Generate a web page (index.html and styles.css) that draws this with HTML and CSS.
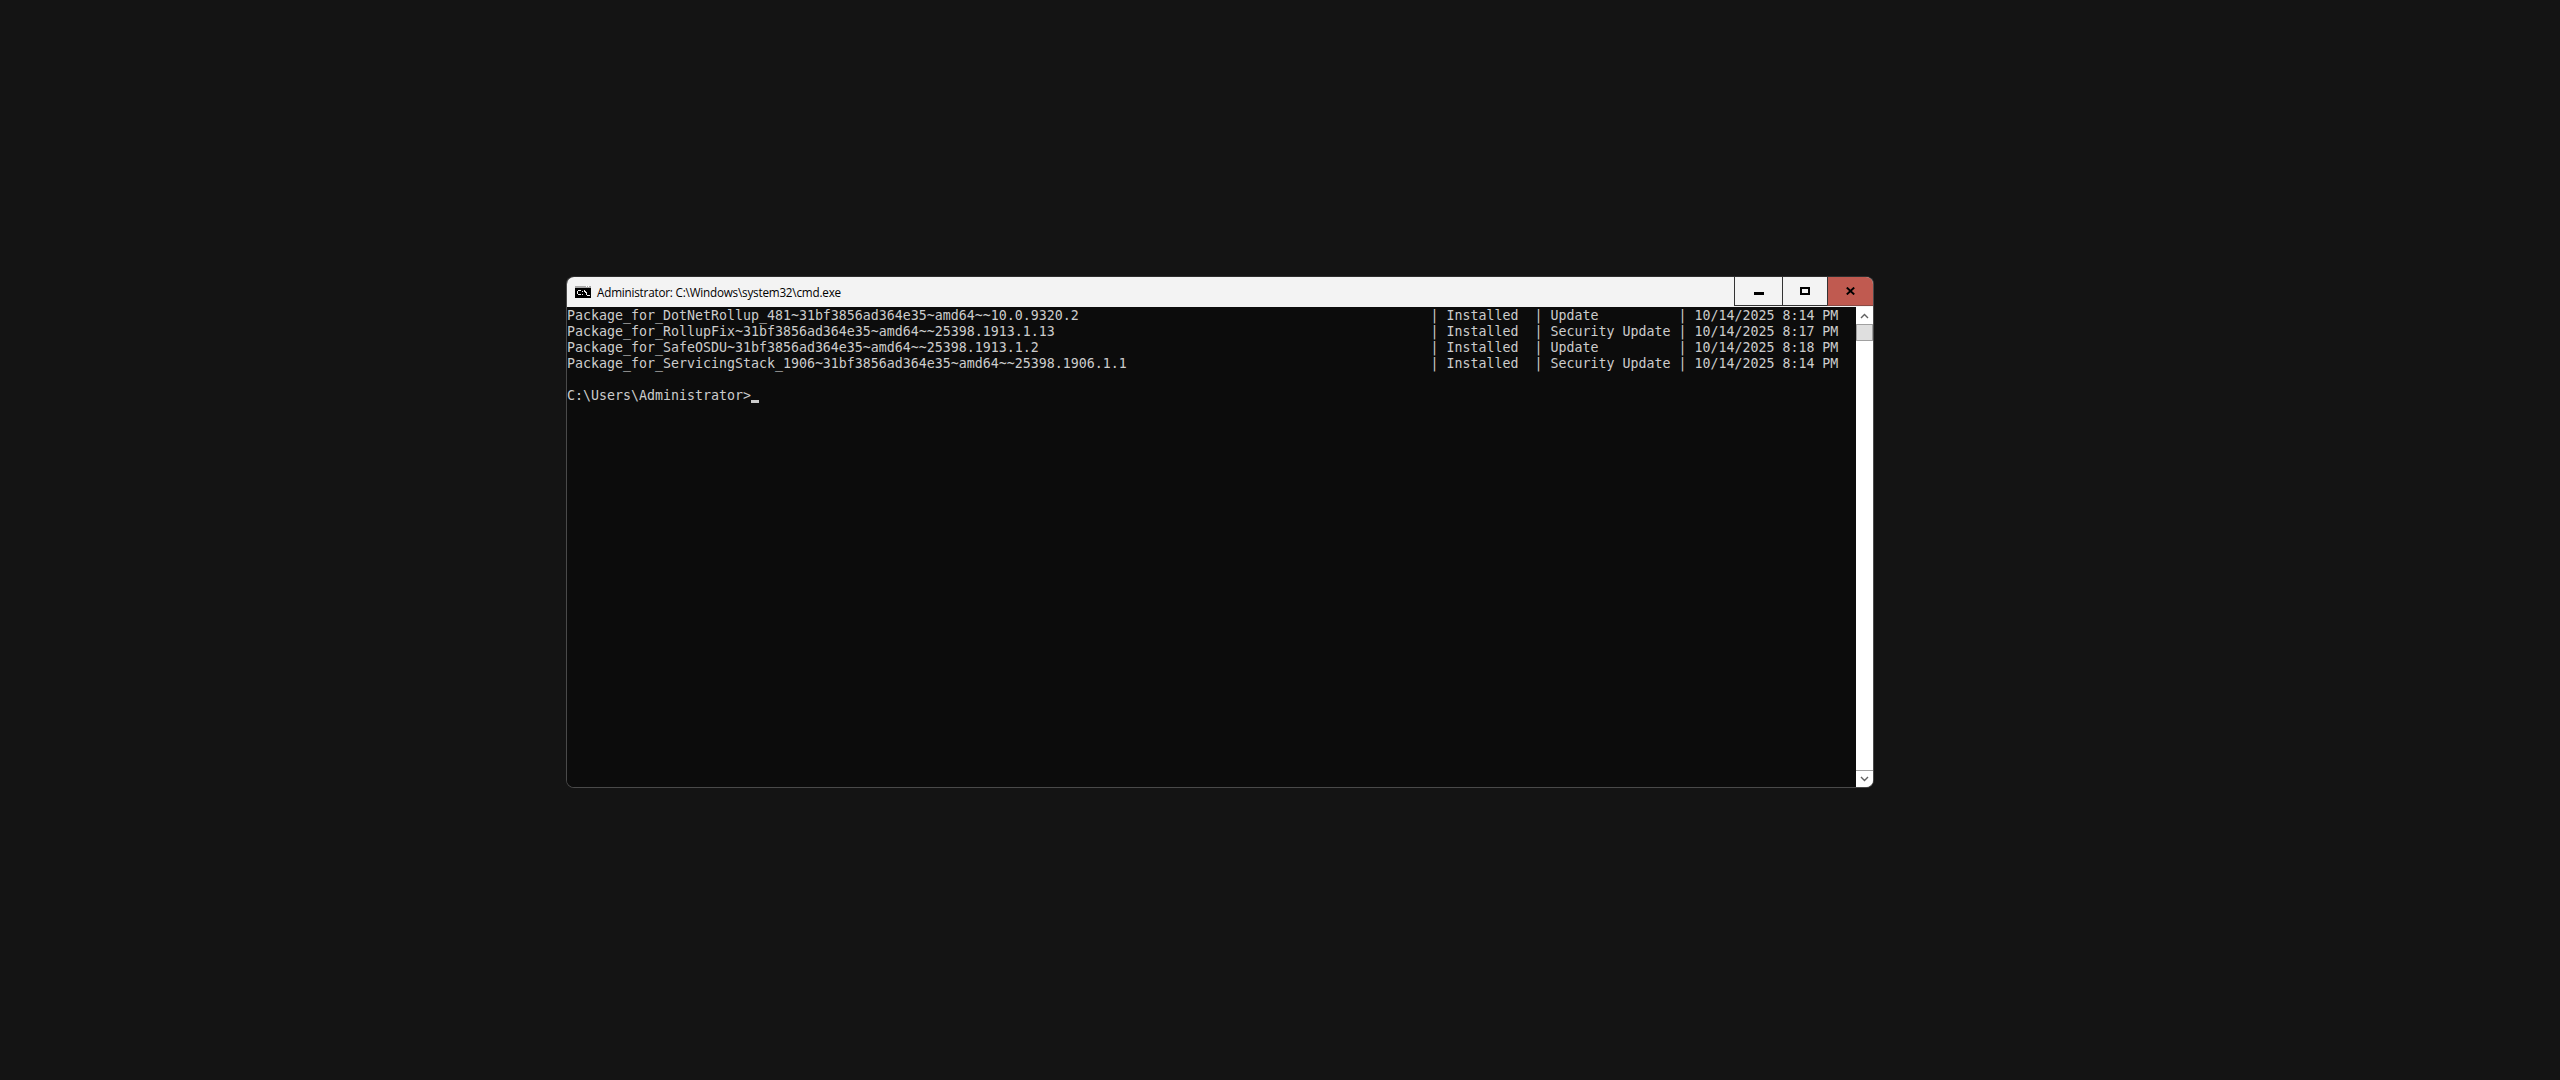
FILE: index.html
```html
<!DOCTYPE html>
<html lang="en">
<head>
<meta charset="utf-8">
<title>Administrator: C:\Windows\system32\cmd.exe</title>
<link rel="stylesheet" href="styles.css">
</head>
<body>
<div class="window">
  <header class="titlebar">
    <svg class="app-icon" width="16" height="12" viewBox="0 0 16 12">
      <rect width="16" height="12" fill="#000"/>
      <rect width="16" height="2" fill="#a8a8a8"/>
      <rect x="11" y="0" width="1" height="1" fill="#fff"/>
      <rect x="13" y="0" width="1" height="1" fill="#fff"/>
      <path d="M3 4h3v1H3v3h3v1H3V8H2V5h1zM7 5h1v1H7zM7 8h1v1H7zM9 4h1v1h1v1h1v3h-1V7h-1V6H9zM12 9h3v1h-3z" fill="#f0f0f0"/>
    </svg>
    <span class="title">Administrator: C:\Windows\system32\cmd.exe</span>
    <div class="controls">
      <button class="ctl min"><svg class="min-glyph" width="10" height="3" viewBox="0 0 10 3"><rect width="10" height="3" fill="#000"/></svg></button>
      <button class="ctl max"><svg width="10" height="8" viewBox="0 0 10 8"><path d="M0 0h10v8H0zM2 2v4h6V2z" fill="#000" fill-rule="evenodd"/></svg></button>
      <button class="ctl close"><svg width="9" height="8" viewBox="0 0 9 8"><path d="M.8.6l7.4 6.8M8.2.6L.8 7.4" stroke="#000" stroke-width="2" fill="none"/></svg></button>
    </div>
  </header>
  <div class="body">
    <pre class="console">Package_for_DotNetRollup_481~31bf3856ad364e35~amd64~~10.0.9320.2                                            | Installed  | Update          | 10/14/2025 8:14 PM
Package_for_RollupFix~31bf3856ad364e35~amd64~~25398.1913.1.13                                               | Installed  | Security Update | 10/14/2025 8:17 PM
Package_for_SafeOSDU~31bf3856ad364e35~amd64~~25398.1913.1.2                                                 | Installed  | Update          | 10/14/2025 8:18 PM
Package_for_ServicingStack_1906~31bf3856ad364e35~amd64~~25398.1906.1.1                                      | Installed  | Security Update | 10/14/2025 8:14 PM

C:\Users\Administrator&gt;<span class="cursor"></span></pre>
    <div class="scrollbar">
      <div class="sb-btn"><svg width="9" height="6" viewBox="0 0 9 6"><path d="M1 5l3.5-3.5L8 5" stroke="#606060" stroke-width="1.4" fill="none"/></svg></div>
      <div class="sb-thumb"></div>
      <div class="sb-track"></div>
      <div class="sb-btn down"><svg width="9" height="6" viewBox="0 0 9 6"><path d="M1 1l3.5 3.5L8 1" stroke="#606060" stroke-width="1.4" fill="none"/></svg></div>
    </div>
  </div>
</div>
</body>
</html>
```

FILE: styles.css
```css
* { box-sizing: border-box; }
html, body { margin: 0; height: 100%; }
body {
  background: #141414;
  padding: 276px 0 0 566px;
  overflow: hidden;
}
.window {
  width: 1308px;
  height: 512px;
  border: 1px solid #4a4a4a;
  border-top-color: #2e2e2e;
  border-radius: 8px;
  overflow: hidden;
  display: flex;
  flex-direction: column;
  background: #0c0c0c;
}
.titlebar {
  height: 30px;
  flex: none;
  background: #f3f3f3;
  display: flex;
  align-items: center;
  padding-left: 8px;
  color: #000;
}
.app-icon { flex: none; }
.title {
  margin-left: 6px;
  font: 11.7px/16px "Open Sans", "Noto Sans", sans-serif;
  letter-spacing: -0.2px;
}
.controls { margin-left: auto; display: flex; height: 30px; align-self: flex-start; }
.ctl {
  height: 29px;
  padding: 0;
  border: 0;
  border-left: 1px solid #333;
  border-bottom: 1px solid #333;
  background: #f3f3f3;
  display: flex;
  align-items: center;
  justify-content: center;
}
.min { width: 48px; }
.min-glyph { margin-top: 5px; }
.max { width: 45px; }
.close { width: 46px; background: #c05a50; border-bottom-color: #8a4a44; }
.body { flex: 1; display: flex; min-height: 0; }
.console {
  flex: 1;
  margin: 0;
  padding: 1px 0 0;
  font: 13.292px/16px "DejaVu Sans Mono", monospace;
  color: #cccccc;
  background: #0c0c0c;
  white-space: pre;
  overflow: hidden;
}
.cursor {
  display: inline-block;
  width: 8px;
  height: 3px;
  background: #cccccc;
  vertical-align: -3px;
}
.scrollbar {
  width: 17px;
  flex: none;
  display: flex;
  flex-direction: column;
  background: #fff;
}
.sb-btn {
  height: 18px;
  flex: none;
  background: #fff;
  display: flex;
  align-items: center;
  justify-content: center;
  border-bottom: 1px solid #a0a0a0;
}
.sb-btn.down { height: 17px; border-bottom: 0; border-top: 1px solid #a0a0a0; }
.sb-thumb {
  height: 16px;
  flex: none;
  background: #dfdfdf;
  border: 1px solid #a0a0a0;
  border-top: 0;
}
.sb-track { flex: 1; background: #fff; }
```
